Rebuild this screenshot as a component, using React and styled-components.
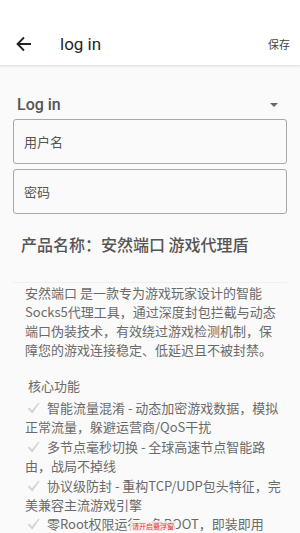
import React from "react";
import styled, { createGlobalStyle } from "styled-components";

const Global = createGlobalStyle`
  html, body { margin: 0; padding: 0; }
  body {
    background: #fafafa;
    font-family: Roboto, "Noto Sans CJK SC", sans-serif;
    overflow: hidden;
  }
`;

const Screen = styled.div`
  width: 300px;
  height: 533px;
  position: relative;
  overflow: hidden;
  background: #fafafa;
`;

const Header = styled.header`
  background: #fff;
  padding-top: 22px;
  border-bottom: 1px solid #e4e4e4;
  box-shadow: 0 1px 2px rgba(0, 0, 0, 0.06);
`;

const Bar = styled.div`
  height: 43px;
  display: flex;
  align-items: center;
  padding: 0 10px 0 16px;
`;

const BackBtn = styled.div`
  width: 16px;
  height: 16px;
  display: flex;
  color: #222;
`;

const Title = styled.h1`
  flex: 1;
  margin: 0 0 0 28px;
  font-size: 17px;
  font-weight: 400;
  color: #1f1f1f;
`;

const SaveBtn = styled.span`
  font-family: "Noto Sans CJK SC", sans-serif;
  font-size: 11px;
  color: #444;
`;

const Spinner = styled.div`
  display: flex;
  align-items: center;
  justify-content: space-between;
  margin: 24px 22px 0 17px;
  height: 29px;
`;

const SpinnerLabel = styled.span`
  font-size: 16px;
  font-weight: 500;
  color: #555;
`;

const Caret = styled.span`
  width: 0;
  height: 0;
  border-left: 4px solid transparent;
  border-right: 4px solid transparent;
  border-top: 4px solid #666;
`;

const Fields = styled.div`
  display: flex;
  flex-direction: column;
  gap: 5px;
  margin: 0 13px;
`;

const Field = styled.div`
  height: 43px;
  border: 1px solid #a8a8a8;
  border-radius: 3px;
  display: flex;
  align-items: center;
  padding-left: 10px;
  font-family: "Noto Sans CJK SC", sans-serif;
  font-size: 13px;
  color: #555;
  background: #fafafa;
`;

const Product = styled.h2`
  margin: 19px 0 0 21px;
  font-family: "Noto Sans CJK SC", sans-serif;
  font-size: 16px;
  font-weight: 500;
  color: #555;
  line-height: 22px;
`;

const Rule = styled.hr`
  margin: 27px 13px 0;
  border: 0;
  border-top: 1px solid #f0f0f0;
`;

const Body = styled.div`
  padding: 0 16px 0 25px;
  font-family: "Noto Sans CJK SC", sans-serif;
  font-size: 13px;
  color: #6a6a6a;
`;

const Para = styled.p`
  margin: 0;
  line-height: 19px;
`;

const Section = styled.p`
  margin: 17px 0 0 3px;
  line-height: 19px;
`;

const List = styled.div`
  margin-top: 3px;
  line-height: 19.4px;
`;

const Check = styled.svg`
  width: 13px;
  height: 12px;
  margin: 0 7px 0 2px;
  vertical-align: -1px;
`;

const Toast = styled.span`
  position: absolute;
  left: 130px;
  top: 521px;
  font-family: "Noto Sans CJK SC", sans-serif;
  font-size: 7px;
  color: #e53935;
  background: rgba(255, 235, 235, 0.8);
  padding: 0 2px;
  line-height: 10px;
`;

const items = [
  "智能流量混淆 - 动态加密游戏数据，模拟正常流量，躲避运营商/QoS干扰",
  "多节点毫秒切换 - 全球高速节点智能路由，战局不掉线",
  "协议级防封 - 重构TCP/UDP包头特征，完美兼容主流游戏引擎",
  "零Root权限运行 - 免ROOT，即装即用",
];

const Tick = () => (
  <Check viewBox="0 0 13 12">
    <defs>
      <linearGradient id="tk" x1="0" y1="0" x2="1" y2="1">
        <stop offset="0" stopColor="#e2e2e2" />
        <stop offset="1" stopColor="#c4c4c4" />
      </linearGradient>
    </defs>
    <path d="M0.5 6.5 L2.5 5.5 L5 8.5 L11.5 0.5 L12.5 1.2 L5.2 11.5 Z" fill="url(#tk)" />
  </Check>
);

export default function App() {
  return (
    <Screen>
      <Global />
      <Header>
        <Bar>
          <BackBtn>
            <svg viewBox="0 0 16 16" width="16" height="16" fill="none" stroke="currentColor" strokeWidth="1.8">
              <path d="M15 8H1.5M8 1.5L1.5 8L8 14.5" />
            </svg>
          </BackBtn>
          <Title>log in</Title>
          <SaveBtn>保存</SaveBtn>
        </Bar>
      </Header>

      <Spinner>
        <SpinnerLabel>Log in</SpinnerLabel>
        <Caret />
      </Spinner>

      <Fields>
        <Field>用户名</Field>
        <Field>密码</Field>
      </Fields>

      <Product>产品名称：安然端口 游戏代理盾</Product>
      <Rule />

      <Body>
        <Para>
          安然端口 是一款专为游戏玩家设计的智能Socks5代理工具，通过深度封包拦截与动态端口伪装技术，有效绕过游戏检测机制，保障您的游戏连接稳定、低延迟且不被封禁。
        </Para>
        <Section>核心功能</Section>
        <List>
          {items.map((t) => (
            <div key={t}>
              <Tick />
              {t}
            </div>
          ))}
        </List>
      </Body>
      <Toast>请开启悬浮窗</Toast>
    </Screen>
  );
}
